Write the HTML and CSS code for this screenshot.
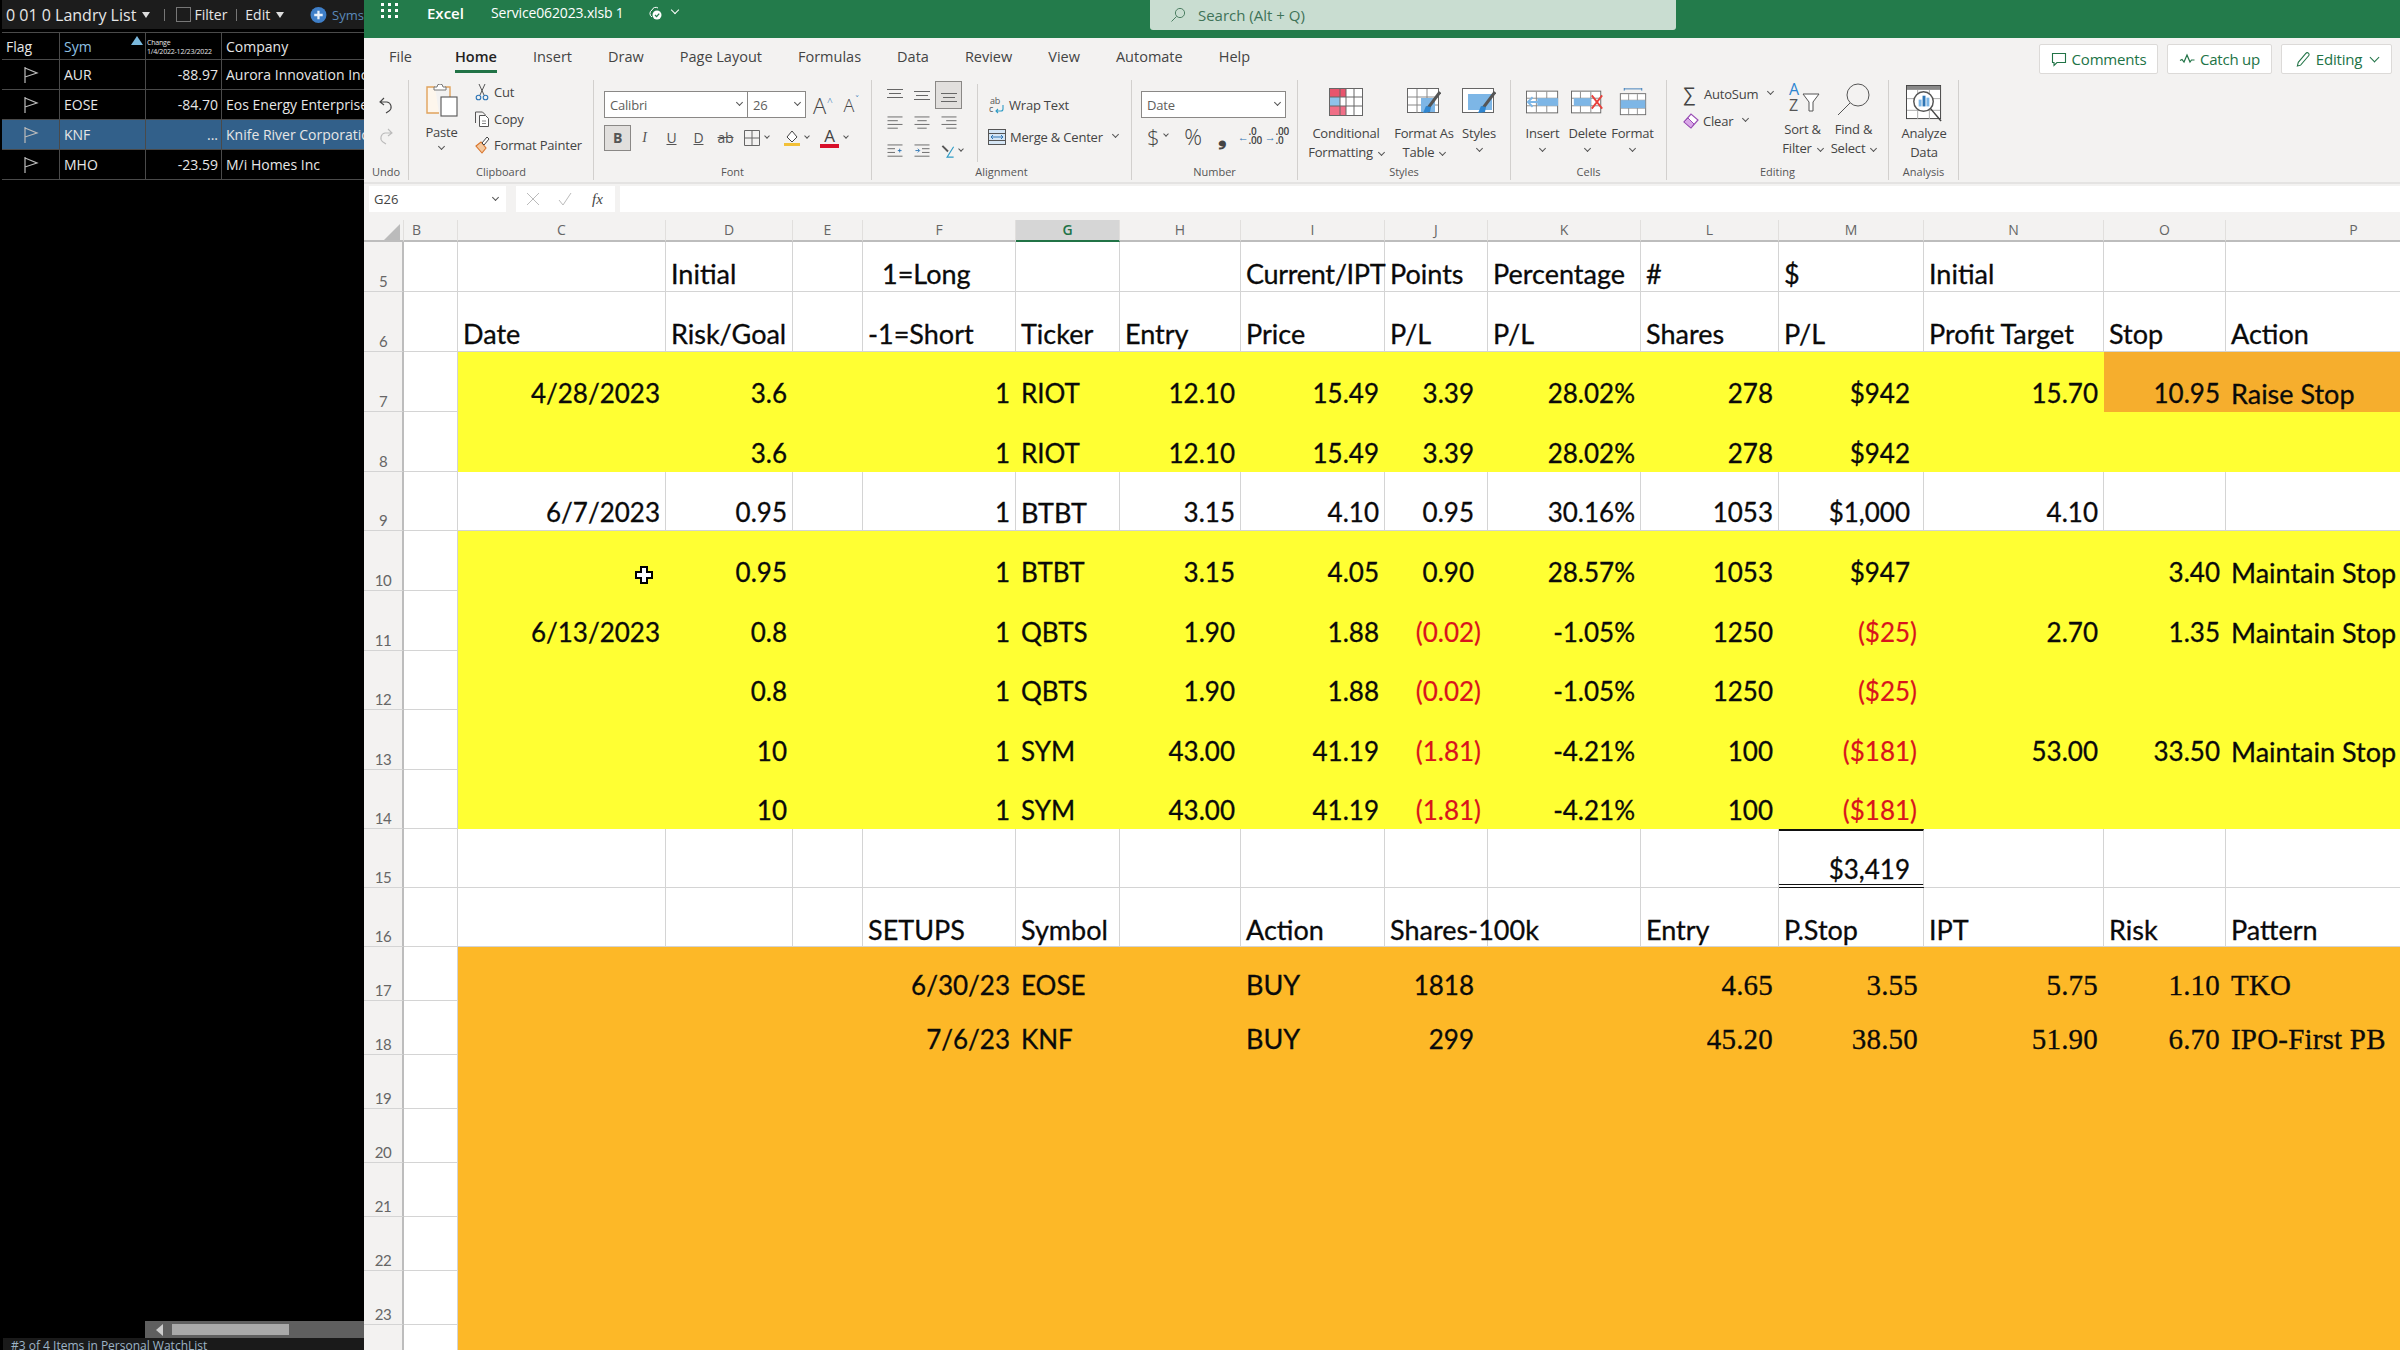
FILE: index.html
```html
<!DOCTYPE html>
<html lang="en">
<head>
    <meta charset="UTF-8">
    <title>Service062023.xlsb - Excel</title>
    <link rel="stylesheet" href="styles.css">
</head>
<body>
<div class="app">

    <!-- watchlist on the left -->
    <aside class="wl">
        <div class="wl-title">
            <span class="wl-name">0 01 0 Landry List</span><i class="caret"></i>
            <span class="wl-pipe"></span>
            <i class="wl-check"></i><span>Filter</span>
            <span class="wl-pipe"></span>
            <span>Edit</span><i class="caret"></i>
            <svg class="wl-plus" viewBox="0 0 18 18"><circle cx="9" cy="9" r="8.5" fill="#3f7fc8"/><path d="M9 4.5v9M4.5 9h9" stroke="#e8f0fa" stroke-width="2.4"/></svg>
            <span class="wl-syms">Syms</span>
        </div>
        <div class="wl-row wl-head">
            <div class="wl-cell">Flag</div>
            <div class="wl-cell wl-sym">Sym<i class="wl-sort"></i></div>
            <div class="wl-cell wl-change">Change<br>1/4/2022-12/23/2022</div>
            <div class="wl-cell">Company</div>
        </div>
        <div class="wl-row">
            <div class="wl-cell wl-flag"><svg viewBox="0 0 16 18"><path d="M2 1v16M2 2l12 5-12 4" fill="none" stroke="#bbb" stroke-width="1.2"/></svg></div>
            <div class="wl-cell">AUR</div>
            <div class="wl-cell wl-num">-88.97</div>
            <div class="wl-cell">Aurora Innovation Inc</div>
        </div>
        <div class="wl-row">
            <div class="wl-cell wl-flag"><svg viewBox="0 0 16 18"><path d="M2 1v16M2 2l12 5-12 4" fill="none" stroke="#bbb" stroke-width="1.2"/></svg></div>
            <div class="wl-cell">EOSE</div>
            <div class="wl-cell wl-num">-84.70</div>
            <div class="wl-cell">Eos Energy Enterprises</div>
        </div>
        <div class="wl-row wl-sel">
            <div class="wl-cell wl-flag"><svg viewBox="0 0 16 18"><path d="M2 1v16M2 2l12 5-12 4" fill="none" stroke="#bbb" stroke-width="1.2"/></svg></div>
            <div class="wl-cell">KNF</div>
            <div class="wl-cell wl-num">...</div>
            <div class="wl-cell">Knife River Corporation</div>
        </div>
        <div class="wl-row">
            <div class="wl-cell wl-flag"><svg viewBox="0 0 16 18"><path d="M2 1v16M2 2l12 5-12 4" fill="none" stroke="#bbb" stroke-width="1.2"/></svg></div>
            <div class="wl-cell">MHO</div>
            <div class="wl-cell wl-num">-23.59</div>
            <div class="wl-cell">M/i Homes Inc</div>
        </div>
        <div class="wl-fill"></div>
        <div class="wl-scroll"><i class="wl-arrow"></i><i class="wl-thumb"></i></div>
        <div class="wl-status">#3 of 4 Items in Personal WatchList</div>
    </aside>

    <main class="xl">
        <div class="topbar">
            <svg class="waffle" viewBox="0 0 17 16"><g fill="#fff"><rect x="0" y="0" width="3" height="3"/><rect x="7" y="0" width="3" height="3"/><rect x="14" y="0" width="3" height="3"/><rect x="0" y="6" width="3" height="3"/><rect x="7" y="6" width="3" height="3"/><rect x="14" y="6" width="3" height="3"/><rect x="0" y="12" width="3" height="3"/><rect x="7" y="12" width="3" height="3"/><rect x="14" y="12" width="3" height="3"/></g></svg>
            <span class="app-name">Excel</span>
            <span class="file-name">Service062023.xlsb 1</span>
            <svg class="saved" viewBox="0 0 16 16"><path d="M5 12a4 4 0 0 1 0-7 4 4 0 0 1 6-2" fill="none" stroke="#fff" stroke-width="1"/><circle cx="10" cy="10" r="4.5" fill="#fff"/><path d="M8 10l1.6 1.6L12.2 8.6" fill="none" stroke="#237b4b" stroke-width="1.3"/></svg>
            <i class="chev chev-white"></i>
            <div class="search">
                <svg viewBox="0 0 16 16"><circle cx="10" cy="6" r="4.6" fill="none" stroke="#4d7f63" stroke-width="1"/><path d="M6.6 9.4L1.5 14.5" stroke="#4d7f63" stroke-width="1"/></svg>
                <span>Search (Alt + Q)</span>
            </div>
        </div>

        <div class="tabs">
            <span class="tab tab-file">File</span>
            <span class="tab tab-on">Home</span>
            <span class="tab">Insert</span>
            <span class="tab">Draw</span>
            <span class="tab">Page Layout</span>
            <span class="tab">Formulas</span>
            <span class="tab">Data</span>
            <span class="tab">Review</span>
            <span class="tab">View</span>
            <span class="tab">Automate</span>
            <span class="tab">Help</span>
            <div class="actions">
                <button class="act act-comments"><svg viewBox="0 0 16 16"><path d="M1.5 2h13v9H6l-3 3v-3H1.5z" fill="none" stroke="#217346" stroke-width="1.1"/></svg>Comments</button>
                <button class="act act-catch"><svg viewBox="0 0 16 16"><path d="M1 9l2-1 2 2.500 3-7 3 7 1.500-2 3 0" fill="none" stroke="#217346" stroke-width="1.2"/></svg>Catch up</button>
                <button class="act act-edit"><svg viewBox="0 0 16 18"><path d="M2 16l1-4L11 2.500a1.500 1.500 0 0 1 3 2.500L5.500 15z" fill="none" stroke="#217346" stroke-width="1.1"/></svg>Editing<i class="chev chev-green"></i></button>
            </div>
        </div>

        <div class="ribbon">
            <section class="grp grp-undo">
                <div class="grp-body undo-body">
                    <svg class="ic18" viewBox="0 0 18 18"><path d="M7 2L3 6l4 3M3 6h7a5 5 0 0 1 2 9l-3 2" fill="none" stroke="#444" stroke-width="1.1"/></svg>
                    <svg class="ic18" viewBox="0 0 18 18"><path d="M11 2l4 4-4 3M15 6H8a5 5 0 0 0-2 9l3 2" fill="none" stroke="#bbb" stroke-width="1.1"/></svg>
                </div>
                <div class="grp-name">Undo</div>
            </section>

            <section class="grp grp-clip">
                <div class="grp-body clip-body">
                    <div class="paste">
                        <svg class="paste-ic" viewBox="0 0 34 34"><path d="M10 3H2v26h12" fill="#fdf6ec" stroke="#e0a35c" stroke-width="1.4"/><path d="M20 3h5v10" fill="none" stroke="#e0a35c" stroke-width="1.4"/><path d="M9 6V3h3a3 3 0 0 1 6 0h3v3z" fill="#fff" stroke="#777" stroke-width="1"/><rect x="16" y="13" width="16" height="19" fill="#fff" stroke="#555" stroke-width="1.1"/></svg>
                        <span>Paste</span>
                        <i class="chev"></i>
                    </div>
                    <div class="small-list clip-list">
                        <div class="small"><svg class="ic16" viewBox="0 0 16 18"><path d="M5 1l5 11M11 1L6 12" fill="none" stroke="#555" stroke-width="1"/><circle cx="4.500" cy="14.500" r="2.300" fill="none" stroke="#2e75b5" stroke-width="1.100"/><circle cx="11.500" cy="14.500" r="2.300" fill="none" stroke="#2e75b5" stroke-width="1.100"/></svg>Cut</div>
                        <div class="small"><svg class="ic16" viewBox="0 0 16 18"><path d="M1.500 13V2h7l3 3" fill="none" stroke="#555" stroke-width="1"/><path d="M5.500 5.500h6l3 3v8h-9z" fill="#fff" stroke="#555" stroke-width="1"/><path d="M8 11h4M8 13.500h4" stroke="#888" stroke-width="1"/></svg>Copy</div>
                        <div class="small"><svg class="ic16" viewBox="0 0 16 18"><path d="M2 10l5-4 5 6-4 5z" fill="#f3c9a0" stroke="#d9742b" stroke-width="1.100"/><path d="M8 7l5-6 2 2-5 6z" fill="#fff" stroke="#444" stroke-width="1"/></svg>Format Painter</div>
                    </div>
                </div>
                <div class="grp-name">Clipboard</div>
            </section>

            <section class="grp grp-font">
                <div class="grp-body font-body">
                    <div class="font-row">
                        <div class="drop drop-font">Calibri<i class="chev"></i></div>
                        <div class="drop drop-size">26<i class="chev"></i></div>
                        <span class="grow">A<sup>^</sup></span>
                        <span class="shrink">A<sup>ˇ</sup></span>
                    </div>
                    <div class="font-row fmt-row">
                        <span class="fmt fmt-on">B</span>
                        <span class="fmt fmt-i">I</span>
                        <span class="fmt fmt-u">U</span>
                        <span class="fmt fmt-d">D</span>
                        <span class="fmt fmt-s">ab</span>
                        <svg class="ic16 borders-ic" viewBox="0 0 16 16"><path d="M.500.500h15v15H.500zM8 .500v15M.500 8h15" fill="none" stroke="#666" stroke-width="1"/></svg><i class="chev chev-small"></i>
                        <span class="fill-btn"><svg class="ic16" viewBox="0 0 16 16"><path d="M8 1l5 6-5 5-5-5z" fill="#fff" stroke="#444" stroke-width="1"/><rect x="0" y="13" width="16" height="3" fill="#f2c037"/></svg></span><i class="chev chev-small"></i>
                        <span class="color-btn">A</span><i class="chev chev-small"></i>
                    </div>
                </div>
                <div class="grp-name">Font</div>
            </section>

            <section class="grp grp-align">
                <div class="grp-body align-body">
                    <div class="align-grid">
                        <span class="al"><svg viewBox="0 0 16 14"><path d="M0 1h16M2 5h12M0 9h16" stroke="#666"/></svg></span>
                        <span class="al"><svg viewBox="0 0 16 14"><path d="M0 3h16M2 7h12M0 11h16" stroke="#666"/></svg></span>
                        <span class="al al-on"><svg viewBox="0 0 16 14"><path d="M0 5h16M2 9h12M0 13h16" stroke="#666"/></svg></span>
                        <span class="al"><svg viewBox="0 0 16 16"><path d="M0 1h16M0 5h11M0 9h16M0 13h11" stroke="#666"/></svg></span>
                        <span class="al"><svg viewBox="0 0 16 16"><path d="M0 1h16M3 5h10M0 9h16M3 13h10" stroke="#666"/></svg></span>
                        <span class="al"><svg viewBox="0 0 16 16"><path d="M0 1h16M5 5h11M0 9h16M5 13h11" stroke="#666"/></svg></span>
                        <span class="al"><svg viewBox="0 0 16 16"><path d="M0 1h16M0 5h8M0 9h8M0 13h16" stroke="#666"/><path d="M11 7h4M13 5v4" stroke="#2e75b5"/></svg></span>
                        <span class="al"><svg viewBox="0 0 16 16"><path d="M0 1h16M8 5h8M8 9h8M0 13h16" stroke="#666"/><path d="M1 7h4M3.500 5l2 2-2 2" fill="none" stroke="#2e75b5"/></svg></span>
                        <span class="al al-orient"><svg viewBox="0 0 16 16"><path d="M2 2l6 6" stroke="#555" stroke-width="2"/><path d="M14 3L7 14h7" fill="none" stroke="#2e9bc5" stroke-width="1.200"/></svg><i class="chev chev-small"></i></span>
                    </div>
                    <div class="align-sep"></div>
                    <div class="small-list wrap-list">
                        <div class="small"><svg class="ic16" viewBox="0 0 16 18"><text class="wrap-ab" x="1" y="8">ab</text><text class="wrap-ab" x="0" y="16">c</text><path d="M14 9v4a2 2 0 0 1-2 2H7M9 13l-2 2 2 2" fill="none" stroke="#2e9bc5" stroke-width="1.100"/></svg>Wrap Text</div>
                        <div class="small"><svg class="ic18 merge-ic" viewBox="0 0 18 18"><rect x=".5" y="1.500" width="17" height="15" fill="#d5e6f5" stroke="#555"/><path d="M.5 5.500h17M.5 12.500h17" stroke="#555"/><path d="M3 9h12M5 7L3 9l2 2M13 7l2 2-2 2" fill="none" stroke="#2e75b5"/></svg>Merge &amp; Center<i class="chev"></i></div>
                    </div>
                </div>
                <div class="grp-name">Alignment</div>
            </section>

            <section class="grp grp-num">
                <div class="grp-body num-body">
                    <div class="drop drop-num">Date<i class="chev"></i></div>
                    <div class="num-row">
                        <span class="num-sym">$</span><i class="chev chev-small"></i>
                        <span class="num-sym pct">%</span>
                        <span class="num-sym comma">❟</span>
                        <span class="dec"><b>←</b><span>.0<br>.00</span></span>
                        <span class="dec"><b>→</b><span>.00<br>.0</span></span>
                    </div>
                </div>
                <div class="grp-name">Number</div>
            </section>

            <section class="grp grp-styles">
                <div class="grp-body tools">
                    <div class="tool tool-cond">
                        <div class="tool-ic"><svg viewBox="0 0 34 28"><rect x=".5" y=".5" width="33" height="27" fill="#fff" stroke="#666"/><rect x="1" y="1" width="16" height="8" fill="#e8556d"/><rect x="1" y="9" width="10" height="9" fill="#8fc3ea"/><rect x="1" y="18" width="16" height="9" fill="#f06f87"/><path d="M11 1v26M17 1v26M25 1v26M1 9h32M1 18h32" stroke="#666" fill="none"/></svg></div>
                        <span>Conditional</span><span>Formatting<i class="chev"></i></span>
                    </div>
                    <div class="tool tool-table">
                        <div class="tool-ic"><svg viewBox="0 0 34 28"><rect x=".5" y=".5" width="31" height="24" fill="#fff" stroke="#666"/><path d="M10 1v24M20 1v24M1 9h30M1 17h30" stroke="#888"/><rect x="14" y="10" width="14" height="14" fill="#7db6e6"/><path d="M33 4L21 20" stroke="#555" stroke-width="3"/><path d="M24 19l-5-1-3 7 7-1z" fill="#2e86d1"/></svg></div>
                        <span>Format As</span><span>Table<i class="chev"></i></span>
                    </div>
                    <div class="tool tool-style">
                        <div class="tool-ic"><svg viewBox="0 0 34 28"><rect x=".5" y=".5" width="31" height="24" fill="#fff" stroke="#666"/><rect x="6" y="6" width="24" height="16" fill="#7db6e6"/><path d="M33 4L21 20" stroke="#555" stroke-width="3"/><path d="M24 19l-5-1-3 7 7-1z" fill="#2e86d1"/></svg></div>
                        <span>Styles</span><i class="chev"></i>
                    </div>
                </div>
                <div class="grp-name">Styles</div>
            </section>

            <section class="grp grp-cells">
                <div class="grp-body tools">
                    <div class="tool tool-cell">
                        <div class="tool-ic"><svg viewBox="0 0 36 28"><rect x=".5" y="2.500" width="33" height="23" fill="#fff" stroke="#666"/><path d="M11 3v22M22 3v22M1 10h32M1 18h32" stroke="#888"/><rect x="12" y="10" width="22" height="8" fill="#7db6e6"/><path d="M14 14H2M7 9l-5 5 5 5" fill="none" stroke="#7db6e6" stroke-width="2"/></svg></div>
                        <span>Insert</span><i class="chev"></i>
                    </div>
                    <div class="tool tool-cell">
                        <div class="tool-ic"><svg viewBox="0 0 36 28"><rect x=".5" y="2.500" width="31" height="23" fill="#fff" stroke="#666"/><path d="M10 3v22M21 3v22M1 10h30M1 18h30" stroke="#888"/><rect x="3" y="10" width="18" height="8" fill="#7db6e6"/><path d="M22 7l11 14M33 7L22 21" stroke="#e8413c" stroke-width="2"/></svg></div>
                        <span>Delete</span><i class="chev"></i>
                    </div>
                    <div class="tool tool-cell">
                        <div class="tool-ic"><svg viewBox="0 0 36 32"><path d="M8 1h20M8 -1v4M28 -1v4" stroke="#2e75b5"/><rect x="3.500" y="6.500" width="29" height="24" fill="#fff" stroke="#666"/><path d="M13 7v24M23 7v24M4 14h28M4 23h28" stroke="#888"/><rect x="4" y="14" width="28" height="9" fill="#7db6e6"/></svg></div>
                        <span>Format</span><i class="chev"></i>
                    </div>
                </div>
                <div class="grp-name">Cells</div>
            </section>

            <section class="grp grp-edit">
                <div class="grp-body tools">
                    <div class="small-list edit-list">
                        <div class="small"><span class="sigma">∑</span>AutoSum<i class="chev"></i></div>
                        <div class="small"><svg class="ic16" viewBox="0 0 16 16"><path d="M1 9l7-8 7 6-7 8z" fill="#fff" stroke="#9a4fb5" stroke-width="1.200"/><path d="M1 9l4-4 6 6-3 4z" fill="#d9a8e8" stroke="#9a4fb5"/></svg>Clear<i class="chev"></i></div>
                    </div>
                    <div class="tool tool-find">
                        <div class="tool-ic"><svg viewBox="0 0 36 32"><text class="sort-a" x="4" y="12">A</text><text class="sort-z" x="4" y="28">Z</text><path d="M18 11h16l-6 8v9h-4v-9z" fill="#fff" stroke="#555"/></svg></div>
                        <span>Sort &amp;</span><span>Filter<i class="chev"></i></span>
                    </div>
                    <div class="tool tool-find">
                        <div class="tool-ic"><svg viewBox="0 0 36 32"><circle cx="22" cy="12" r="11" fill="none" stroke="#555"/><path d="M14 20L2 32" stroke="#555"/></svg></div>
                        <span>Find &amp;</span><span>Select<i class="chev"></i></span>
                    </div>
                </div>
                <div class="grp-name">Editing</div>
            </section>

            <section class="grp grp-analysis">
                <div class="grp-body tools">
                    <div class="tool tool-an">
                        <div class="tool-ic"><svg viewBox="0 0 38 38"><rect x=".5" y=".5" width="35" height="34" fill="#fff" stroke="#444"/><rect x="1" y="1" width="34" height="4" fill="#888"/><path d="M12 5v30M24 5v30M1 14h34M1 26h34" stroke="#aaa"/><circle cx="18" cy="17" r="10" fill="#fff" stroke="#555" stroke-width="1.500"/><rect x="13" y="15" width="3" height="7" fill="#7db6e6"/><rect x="17" y="11" width="3" height="11" fill="#2e75b5"/><rect x="21" y="13" width="3" height="9" fill="#7db6e6"/><path d="M25 24l11 13" stroke="#444" stroke-width="1.500"/></svg></div>
                        <span>Analyze</span><span>Data</span>
                    </div>
                </div>
                <div class="grp-name">Analysis</div>
            </section>
        </div>

        <div class="fbar">
            <div class="namebox">G26<i class="chev"></i></div>
            <div class="fbtns">
                <svg class="ic14" viewBox="0 0 14 14"><path d="M1 1l12 12M13 1L1 13" stroke="#bbb"/></svg>
                <svg class="ic14" viewBox="0 0 14 14"><path d="M1 8l4 5 8-12" fill="none" stroke="#bbb"/></svg>
                <span class="fx">fx</span>
            </div>
            <div class="finput"></div>
        </div>

        <div class="sheet-wrap">
            <table class="sheet">
                <colgroup>
                    <col class="c-rh"><col class="c-b"><col class="c-c"><col class="c-d"><col class="c-e"><col class="c-f"><col class="c-g"><col class="c-h"><col class="c-i"><col class="c-j"><col class="c-k"><col class="c-l"><col class="c-m"><col class="c-n"><col class="c-o"><col class="c-p">
                </colgroup>
                <thead>
                    <tr class="col-head">
                        <th class="corner"><i></i></th><th class="bl">B</th><th>C</th><th>D</th><th>E</th><th>F</th><th class="col-on">G</th><th>H</th><th>I</th><th>J</th><th>K</th><th>L</th><th>M</th><th>N</th><th>O</th><th>P</th>
                    </tr>
                </thead>
                <tbody>
                    <tr class="h50"><th>5</th><td></td><td></td><td>Initial</td><td></td><td class="ind">1=Long</td><td></td><td></td><td class="tight">Current/IPT</td><td>Points</td><td>Percentage</td><td>#</td><td>$</td><td>Initial</td><td></td><td></td></tr>
                    <tr><th>6</th><td></td><td>Date</td><td>Risk/Goal</td><td></td><td>-1=Short</td><td>Ticker</td><td>Entry</td><td>Price</td><td>P/L</td><td>P/L</td><td>Shares</td><td>P/L</td><td>Profit Target</td><td>Stop</td><td>Action</td></tr>
                    <tr class="yel"><th>7</th><td></td><td class="r">4/28/2023</td><td class="r">3.6</td><td></td><td class="r">1</td><td>RIOT</td><td class="r">12.10</td><td class="r">15.49</td><td class="r acc">3.39</td><td class="r">28.02%</td><td class="r">278</td><td class="r acc">$942</td><td class="r">15.70</td><td class="r stop">10.95</td><td class="stop">Raise Stop</td></tr>
                    <tr class="yel"><th>8</th><td></td><td></td><td class="r">3.6</td><td></td><td class="r">1</td><td>RIOT</td><td class="r">12.10</td><td class="r">15.49</td><td class="r acc">3.39</td><td class="r">28.02%</td><td class="r">278</td><td class="r acc">$942</td><td></td><td></td><td></td></tr>
                    <tr class="h59"><th>9</th><td></td><td class="r">6/7/2023</td><td class="r">0.95</td><td></td><td class="r">1</td><td>BTBT</td><td class="r">3.15</td><td class="r">4.10</td><td class="r acc">0.95</td><td class="r">30.16%</td><td class="r">1053</td><td class="r acc">$1,000</td><td class="r">4.10</td><td></td><td></td></tr>
                    <tr class="yel"><th>10</th><td></td><td></td><td class="r">0.95</td><td></td><td class="r">1</td><td>BTBT</td><td class="r">3.15</td><td class="r">4.05</td><td class="r acc">0.90</td><td class="r">28.57%</td><td class="r">1053</td><td class="r acc">$947</td><td></td><td class="r">3.40</td><td>Maintain Stop</td></tr>
                    <tr class="yel"><th>11</th><td></td><td class="r">6/13/2023</td><td class="r">0.8</td><td></td><td class="r">1</td><td>QBTS</td><td class="r">1.90</td><td class="r">1.88</td><td class="r neg">(0.02)</td><td class="r">-1.05%</td><td class="r">1250</td><td class="r neg">($25)</td><td class="r">2.70</td><td class="r">1.35</td><td>Maintain Stop</td></tr>
                    <tr class="yel h59"><th>12</th><td></td><td></td><td class="r">0.8</td><td></td><td class="r">1</td><td>QBTS</td><td class="r">1.90</td><td class="r">1.88</td><td class="r neg">(0.02)</td><td class="r">-1.05%</td><td class="r">1250</td><td class="r neg">($25)</td><td></td><td></td><td></td></tr>
                    <tr class="yel"><th>13</th><td></td><td></td><td class="r">10</td><td></td><td class="r">1</td><td>SYM</td><td class="r">43.00</td><td class="r">41.19</td><td class="r neg">(1.81)</td><td class="r">-4.21%</td><td class="r">100</td><td class="r neg">($181)</td><td class="r">53.00</td><td class="r">33.50</td><td>Maintain Stop</td></tr>
                    <tr class="yel h59"><th>14</th><td></td><td></td><td class="r">10</td><td></td><td class="r">1</td><td>SYM</td><td class="r">43.00</td><td class="r">41.19</td><td class="r neg">(1.81)</td><td class="r">-4.21%</td><td class="r">100</td><td class="r neg">($181)</td><td></td><td></td><td></td></tr>
                    <tr class="h59"><th>15</th><td></td><td></td><td></td><td></td><td></td><td></td><td></td><td></td><td></td><td></td><td></td><td class="r acc total">$3,419</td><td></td><td></td><td></td></tr>
                    <tr class="h59 low"><th>16</th><td></td><td></td><td></td><td></td><td>SETUPS</td><td>Symbol</td><td></td><td>Action</td><td>Shares-100k</td><td></td><td>Entry</td><td>P.Stop</td><td>IPT</td><td class="risk">Risk</td><td>Pattern</td></tr>
                    <tr class="org"><th>17</th><td></td><td></td><td></td><td></td><td class="r">6/30/23</td><td>EOSE</td><td></td><td>BUY</td><td class="r acc">1818</td><td></td><td class="r ser">4.65</td><td class="r ser">3.55</td><td class="r ser">5.75</td><td class="r ser">1.10</td><td class="ser">TKO</td></tr>
                    <tr class="org"><th>18</th><td></td><td></td><td></td><td></td><td class="r">7/6/23</td><td>KNF</td><td></td><td>BUY</td><td class="r acc">299</td><td></td><td class="r ser">45.20</td><td class="r ser">38.50</td><td class="r ser">51.90</td><td class="r ser">6.70</td><td class="ser">IPO-First PB</td></tr>
                    <tr class="org"><th>19</th><td></td><td></td><td></td><td></td><td></td><td></td><td></td><td></td><td></td><td></td><td></td><td></td><td></td><td></td><td></td></tr>
                    <tr class="org"><th>20</th><td></td><td></td><td></td><td></td><td></td><td></td><td></td><td></td><td></td><td></td><td></td><td></td><td></td><td></td><td></td></tr>
                    <tr class="org"><th>21</th><td></td><td></td><td></td><td></td><td></td><td></td><td></td><td></td><td></td><td></td><td></td><td></td><td></td><td></td><td></td></tr>
                    <tr class="org"><th>22</th><td></td><td></td><td></td><td></td><td></td><td></td><td></td><td></td><td></td><td></td><td></td><td></td><td></td><td></td><td></td></tr>
                    <tr class="org"><th>23</th><td></td><td></td><td></td><td></td><td></td><td></td><td></td><td></td><td></td><td></td><td></td><td></td><td></td><td></td><td></td></tr>
                    <tr class="org"><th></th><td></td><td></td><td></td><td></td><td></td><td></td><td></td><td></td><td></td><td></td><td></td><td></td><td></td><td></td><td></td></tr>
                </tbody>
            </table>
            <!-- excel cell cursor -->
            <svg class="cursor" viewBox="0 0 18 18"><path d="M6 1h6v5h5v6h-5v5H6v-5H1V6h5z" fill="#fff" stroke="#000" stroke-width="2"/></svg>
        </div>
    </main>
</div>
</body>
</html>
```

FILE: styles.css
```css
* {
    box-sizing: border-box;
}

html, body {
    margin: 0;
    padding: 0;
    height: 100%;
    overflow: hidden;
    background-color: #000;
}

.app {
    display: flex;
    width: 2400px;
    height: 1350px;
    overflow: hidden;
    font-family: "Open Sans", "Liberation Sans", sans-serif;
}

/* watchlist */

.wl {
    display: flex;
    flex-direction: column;
    width: 364px;
    flex: none;
    background-color: #000;
    color: #e6e6e6;
    font-size: 14px;
}

.wl-title {
    display: flex;
    align-items: center;
    height: 29px;
    margin: 0 0 3px 2px;
    padding-left: 4px;
    background-color: #1c1c1c;
    font-size: 14px;
    white-space: nowrap;
}

.wl-name {
    font-size: 16px;
}

.caret {
    width: 0;
    height: 0;
    margin-left: 6px;
    border-left: 4.5px solid transparent;
    border-right: 4.5px solid transparent;
    border-top: 6px solid #ddd;
}

.wl-pipe {
    width: 1px;
    height: 12px;
    margin: 0 5px 0 14px;
    background-color: #777;
}

.wl-pipe + .wl-check {
    margin-left: 6px;
}

.wl-pipe + span {
    margin-left: 3px;
}

.wl-check {
    width: 15px;
    height: 15px;
    margin: 0 4px 0 2px;
    border: 1px solid #777;
}

.wl-check + span + .wl-pipe {
    margin-left: 9px;
}

.wl-plus {
    width: 18px;
    height: 18px;
    margin-left: 26px;
}

.wl-syms {
    margin-left: 5px;
    font-size: 13px;
    color: #5a89b8;
}

.wl-row {
    display: grid;
    grid-template-columns: 58px 86px 76px 1fr;
    height: 30px;
    border-bottom: 1px solid #4a4a4a;
    margin-left: 2px;
    white-space: nowrap;
    overflow: hidden;
}

.wl-head {
    height: 28px;
    border-top: 1px solid #4a4a4a;
    font-size: 14px;
}

.wl-cell {
    display: flex;
    align-items: center;
    padding-left: 4px;
    border-right: 1px solid #4a4a4a;
    overflow: hidden;
}

.wl-cell:last-child {
    border-right: none;
}

.wl-sym {
    position: relative;
    color: #8fc1e3;
}

.wl-sort {
    position: absolute;
    top: 3px;
    right: 2px;
    width: 0;
    height: 0;
    border-left: 6px solid transparent;
    border-right: 6px solid transparent;
    border-bottom: 9px solid #7ab8dc;
}

.wl-change {
    display: block;
    padding: 5px 0 0 1px;
    font-size: 7px;
    line-height: 9px;
    letter-spacing: -0.2px;
}

.wl-flag {
    justify-content: center;
    padding-left: 0;
}

.wl-flag svg {
    width: 16px;
    height: 18px;
}

.wl-num {
    justify-content: flex-end;
    padding-right: 3px;
}

.wl-sel {
    background-color: #32608a;
}

.wl-fill {
    flex: 1;
}

.wl-scroll {
    display: flex;
    align-items: center;
    height: 17px;
    margin-left: 145px;
    padding-left: 11px;
    background-color: #5f5f5f;
}

.wl-arrow {
    width: 0;
    height: 0;
    border-top: 6px solid transparent;
    border-bottom: 6px solid transparent;
    border-right: 7px solid #ccc;
}

.wl-thumb {
    width: 117px;
    height: 11px;
    margin-left: 9px;
    background-color: #a9a9a9;
}

.wl-status {
    height: 12px;
    margin-left: 3px;
    padding-left: 8px;
    background-color: #1a1a1a;
    color: #9db3c5;
    font-size: 12px;
    line-height: 15px;
    overflow: hidden;
}

/* excel title bar */

.xl {
    display: flex;
    flex-direction: column;
    flex: 1;
    min-width: 0;
    background-color: #f3f2f1;
    color: #444;
}

.topbar {
    display: flex;
    align-items: flex-start;
    height: 38px;
    flex: none;
    padding-left: 17px;
    background-color: #237b4b;
    color: #fff;
    font-size: 14px;
    line-height: 26px;
    white-space: nowrap;
}

.waffle {
    width: 17px;
    height: 16px;
    margin-top: 3px;
}

.app-name {
    margin-left: 29px;
    font-weight: 600;
    font-size: 15px;
}

.file-name {
    margin-left: 27px;
    width: 154px;
    letter-spacing: -0.15px;
}

.saved {
    width: 16px;
    height: 16px;
    margin-top: 5px;
    margin-left: 2px;
}

.search {
    display: flex;
    align-items: center;
    width: 526px;
    height: 30px;
    margin-left: 472px;
    padding-left: 20px;
    background-color: #c9ddd1;
    border-radius: 0 0 3px 3px;
    color: #3f7358;
    font-size: 15px;
}

.search svg {
    width: 16px;
    height: 16px;
    margin-right: 12px;
}

/* chevrons are just two borders */

.chev {
    display: inline-block;
    width: 5px;
    height: 5px;
    margin-left: 6px;
    border-right: 1px solid #555;
    border-bottom: 1px solid #555;
    transform: translateY(-2px) rotate(45deg);
}

.chev-white {
    width: 6px;
    height: 6px;
    margin: 7px 0 0 9px;
    border-color: #fff;
    transform: rotate(45deg);
}

.chev-green {
    width: 7px;
    height: 7px;
    margin-left: 9px;
    border-color: #217346;
}

.chev-small {
    width: 4px;
    height: 4px;
    margin-left: 5px;
    margin-right: 8px;
}

/* tabs */

.tabs {
    display: flex;
    height: 42px;
    flex: none;
    gap: 36px;
    padding-left: 25px;
    font-size: 14.5px;
    color: #444;
    white-space: nowrap;
}

.tab {
    height: 35px;
    line-height: 38px;
}

.tab-file {
    margin-right: 7px;
}

.tab-on {
    border-bottom: 3px solid #217346;
    font-weight: 600;
    color: #222;
}

.actions {
    display: flex;
    gap: 9px;
    margin-left: auto;
    margin-top: 6px;
    padding-right: 8px;
    height: 30px;
}

.act {
    display: flex;
    align-items: center;
    justify-content: center;
    height: 30px;
    padding: 0;
    background-color: #fff;
    border: 1px solid #dcdad8;
    border-radius: 2px;
    color: #217346;
    font-family: inherit;
    font-size: 15px;
    letter-spacing: -0.2px;
}

.act svg {
    width: 16px;
    height: 17px;
    margin-right: 5px;
}

.act-comments {
    width: 119px;
}

.act-catch {
    width: 105px;
}

.act-edit {
    width: 111px;
}

/* ribbon */

.ribbon {
    display: flex;
    height: 102px;
    flex: none;
    font-size: 13px;
    letter-spacing: -0.2px;
    color: #444;
    box-shadow: 0 2px 0 #e4e3e2;
    white-space: nowrap;
}

.grp {
    display: flex;
    flex-direction: column;
    height: 100px;
    border-right: 1px solid #d2d0ce;
    flex: none;
}

.grp-body {
    height: 84px;
}

.grp-name {
    font-size: 11px;
    line-height: 16px;
    text-align: center;
    color: #555;
    letter-spacing: 0;
}

.grp-undo { width: 45px; }
.grp-clip { width: 185px; }
.grp-font { width: 278px; }
.grp-align { width: 260px; }
.grp-num { width: 166px; }
.grp-styles { width: 213px; }
.grp-cells { width: 156px; }
.grp-edit { width: 222px; }
.grp-analysis { width: 70px; border-right: 1px solid #d2d0ce; }

.ic18 { width: 18px; height: 18px; flex: none; }
.ic16 { width: 16px; height: 18px; flex: none; }
.ic14 { width: 14px; height: 14px; flex: none; }

.undo-body {
    display: flex;
    flex-direction: column;
    align-items: center;
    gap: 13px;
    padding-top: 16px;
}

.clip-body {
    display: flex;
}

.paste {
    display: flex;
    flex-direction: column;
    align-items: center;
    width: 65px;
    flex: none;
    padding-top: 4px;
    line-height: 18px;
}

.paste-ic {
    width: 34px;
    height: 34px;
    margin-bottom: 5px;
}

.paste .chev {
    margin: 5px 0 0;
}

.small-list {
    display: flex;
    flex-direction: column;
}

.clip-list {
    margin-top: -1px;
}

.clip-list .small {
    height: 26.5px;
}

.small {
    display: flex;
    align-items: center;
    height: 27px;
    gap: 4px;
}

/* font group */

.font-body {
    padding: 11px 0 0 10px;
}

.font-row {
    display: flex;
    align-items: center;
}

.drop {
    display: flex;
    align-items: center;
    justify-content: space-between;
    height: 27px;
    padding: 0 5px 0 5px;
    background-color: #fff;
    border: 1px solid #8a8886;
    color: #605e5c;
    font-size: 13px;
}

.drop-font {
    width: 144px;
}

.drop-size {
    width: 58px;
    border-left: none;
}

.grow, .shrink {
    margin-left: 7px;
    font-size: 22px;
    font-weight: 300;
    line-height: 20px;
}

.grow sup, .shrink sup {
    margin-left: 1px;
    font-size: 10px;
    color: #2e75b5;
    vertical-align: 8px;
    line-height: 0;
}

.shrink {
    margin-left: 11px;
    font-size: 18px;
}

.fmt-row {
    height: 27px;
    margin-top: 6px;
}

.fmt {
    width: 27px;
    text-align: center;
    font-size: 14px;
    color: #555;
    font-family: "Liberation Serif", serif;
}

.fmt-on {
    height: 26px;
    line-height: 24px;
    background-color: #e1dfdd;
    border: 1px solid #8a8886;
    font-weight: bold;
    font-family: "Open Sans", sans-serif;
}

.fmt-i {
    font-style: italic;
}

.fmt-u, .fmt-d {
    text-decoration: underline;
    font-family: "Open Sans", sans-serif;
}

.fmt-s {
    text-decoration: line-through;
    font-family: "Open Sans", sans-serif;
}

.borders-ic {
    margin-left: 5px;
}

.fill-btn {
    margin-left: 7px;
    height: 18px;
}

.color-btn {
    width: 19px;
    height: 20px;
    margin-left: 3px;
    border-bottom: 4px solid #d8102a;
    text-align: center;
    font-size: 17px;
    line-height: 16px;
}

/* alignment group */

.align-body {
    display: flex;
    padding-left: 9px;
}

.align-grid {
    display: grid;
    grid-template-columns: repeat(3, 27px);
    grid-auto-rows: 28px;
    flex: none;
    padding-top: 1px;
}

.al {
    display: flex;
    align-items: center;
    justify-content: center;
}

.al svg {
    width: 16px;
    height: 15px;
}

.al-on {
    background-color: #e1dfdd;
    border: 1px solid #8a8886;
}

.al-orient .chev-small {
    margin-right: -6px;
    margin-left: 3px;
}

.align-sep {
    width: 1px;
    height: 78px;
    margin: 4px 11px 0 15px;
    background-color: #d2d0ce;
}

.wrap-list {
    padding-top: 11px;
    gap: 5px;
}

.wrap-ab {
    font-size: 9px;
    fill: #555;
}

.merge-ic {
    margin-left: -1px;
}

/* number group */

.num-body {
    padding: 11px 0 0 9px;
}

.drop-num {
    width: 145px;
}

.num-row {
    display: flex;
    align-items: center;
    height: 24px;
    margin-top: 6px;
    padding-left: 6px;
}

.num-sym {
    font-size: 22px;
    font-weight: 300;
}

.num-row .chev-small {
    margin-right: 16px;
}

.pct {
    margin-right: 16px;
}

.comma {
    font-weight: bold;
    margin-right: 11px;
}

.dec {
    display: flex;
    align-items: center;
    width: 27px;
    font-size: 10px;
    line-height: 9px;
    font-weight: 600;
}

.dec b {
    color: #2e75b5;
    font-size: 11px;
    font-weight: 400;
}

/* big ribbon buttons */

.tools {
    display: flex;
}

.grp-styles .tools {
    padding-left: 5px;
}

.grp-cells .tools {
    padding-left: 9px;
}

.tool {
    display: flex;
    flex-direction: column;
    align-items: center;
    line-height: 19px;
    flex: none;
}

.tool > .chev {
    margin: 5px 0 0;
}

.tool-ic {
    height: 36px;
    margin-top: 8px;
}

.tool-ic svg {
    display: block;
    width: 34px;
    height: 28px;
}

.tool-cond { width: 86px; }
.tool-table { width: 70px; }
.tool-style { width: 40px; }
.tool-cell { width: 45px; }
.tool-find { width: 51px; }

.tool-find .tool-ic {
    margin-top: 3px;
    height: 37px;
}

.tool-find .tool-ic svg {
    width: 36px;
    height: 32px;
}

.tool-an {
    width: 70px;
}

.tool-an .tool-ic {
    margin-top: 5px;
    height: 39px;
}

.tool-an .tool-ic svg {
    width: 37px;
    height: 37px;
}

.edit-list {
    width: 94px;
    margin-left: 16px;
    flex: none;
}

.sigma {
    width: 17px;
    font-size: 19px;
    line-height: 20px;
}

.sort-a {
    font-size: 16px;
    fill: #2e86d1;
}

.sort-z {
    font-size: 16px;
    fill: #555;
}

/* formula bar */

.fbar {
    display: flex;
    align-items: stretch;
    height: 26px;
    margin-top: 4px;
    flex: none;
    padding-left: 5px;
    gap: 5px;
}

.namebox {
    display: flex;
    align-items: center;
    justify-content: space-between;
    width: 137px;
    padding: 0 8px 0 5px;
    background-color: #fff;
    color: #444;
    font-size: 13px;
    margin-right: 5px;
}

.fbtns {
    display: flex;
    align-items: center;
    gap: 18px;
    width: 99px;
    padding-left: 10px;
    background-color: #fff;
}

.fx {
    font-family: "Liberation Serif", serif;
    font-style: italic;
    font-size: 15px;
    margin-left: 2px;
}

.finput {
    flex: 1;
    background-color: #fff;
}

/* sheet */

.sheet-wrap {
    position: relative;
    flex: 1;
    margin-top: 8px;
    overflow: hidden;
    background-color: #fff;
}

.sheet {
    width: 2118px;
    table-layout: fixed;
    border-collapse: separate;
    border-spacing: 0;
    font-family: Lato, "Liberation Sans", sans-serif;
    font-size: 27px;
    color: #0a0a0a;
    -webkit-text-stroke: 0.3px #0a0a0a;
}

.c-rh { width: 40px; }
.c-b { width: 54px; }
.c-c { width: 208px; }
.c-d { width: 127px; }
.c-e { width: 70px; }
.c-f { width: 153px; }
.c-g { width: 104px; }
.c-h { width: 121px; }
.c-i { width: 144px; }
.c-j { width: 103px; }
.c-k { width: 153px; }
.c-l { width: 138px; }
.c-m { width: 145px; }
.c-n { width: 180px; }
.c-o { width: 122px; }
.c-p { width: 256px; }

.sheet tr {
    height: 60px;
}

.sheet tr.col-head {
    height: 22px;
}

.sheet tr.h50 { height: 50px; }
.sheet tr.h59 { height: 59px; }
.sheet tr.org { height: 54px; }

.col-head th {
    padding: 0;
    background-color: #f3f2f1;
    border-right: 1px solid #e1dfdd;
    border-bottom: 2px solid #bdbdbd;
    color: #666;
    font-family: "Open Sans", sans-serif;
    font-size: 14px;
    font-weight: 400;
    line-height: 18px;
    text-align: center;
    -webkit-text-stroke: 0;
}

.col-head .bl {
    text-align: left;
    padding-left: 8px;
}

.col-head .col-on {
    background-color: #d6d6d6;
    border-bottom-color: #217346;
    color: #217346;
    font-weight: 600;
}

.corner i {
    display: block;
    width: 0;
    height: 0;
    margin: 4px 0 0 20px;
    border-left: 16px solid transparent;
    border-bottom: 16px solid #bbb;
}

.sheet tbody th {
    padding: 0 0 2px;
    background-color: #f3f2f1;
    border-right: 2px solid #bdbdbd;
    border-bottom: 1px solid #d4d4d4;
    color: #666;
    font-size: 15px;
    font-weight: 400;
    letter-spacing: -0.5px;
    line-height: 15px;
    vertical-align: bottom;
    -webkit-text-stroke: 0;
}

.sheet td {
    padding: 0 5px 2px;
    background-color: #fff;
    border-right: 1px solid #d4d4d4;
    border-bottom: 1px solid #d4d4d4;
    line-height: 30px;
    vertical-align: bottom;
    white-space: nowrap;
}

.sheet .r {
    padding-bottom: 3px;
    font-size: 26px;
    text-align: right;
}

/* tickers run a little narrower than the labels */
.yel td:nth-of-type(6), .org td:nth-of-type(6) {
    padding-bottom: 3px;
    font-size: 26px;
}

.sheet .tight {
    letter-spacing: -0.3px;
}

.sheet .acc {
    padding-right: 13px;
}

.sheet .neg {
    padding-right: 6px;
    color: #d8141c;
    -webkit-text-stroke: 0.2px #d8141c;
}

.sheet .ind {
    padding-left: 19px;
}

.yel td {
    background-color: #ffff33;
    border-color: #ffff33;
}

.org td {
    background-color: #fdb827;
    border-color: #fdb827;
}

.yel td:first-of-type, .org td:first-of-type {
    background-color: #fff;
    border-color: #d4d4d4;
}

.sheet .stop {
    background-color: #f6ae2d;
    border-color: #f6ae2d;
}

.sheet .total {
    padding-bottom: 0;
    border-top: 2px solid #111;
    border-bottom: 4px double #111;
}

.low td {
    padding-bottom: 1px;
}

.sheet .org td, .sheet .org td.r {
    padding-bottom: 0;
}

.sheet .org td.ser {
    padding-bottom: 0;
    font-family: "Liberation Serif", serif;
    font-size: 29px;
    letter-spacing: 0.2px;
}

.cursor {
    position: absolute;
    left: 271px;
    top: 346px;
    width: 18px;
    height: 18px;
}
```
